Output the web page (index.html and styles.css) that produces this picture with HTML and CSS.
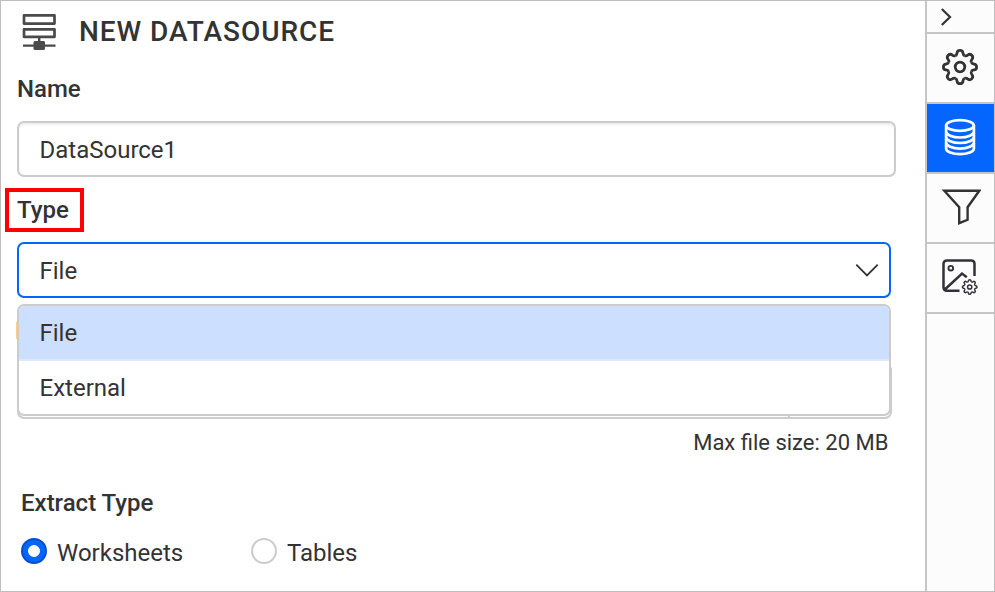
FILE: index.html
```html
<!DOCTYPE html>
<html lang="en">
<head>
<meta charset="utf-8">
<title>New Datasource</title>
<link rel="stylesheet" href="styles.css">
</head>
<body>
<div class="window">
  <main class="panel">
    <header class="header">
      <svg class="server" width="36" height="38" viewBox="0 0 36 38" fill="none" stroke="#4a4a4a">
        <path d="M2 2.400h30.500v8.200H2zM2 16.400h30.500v7.400H2z" stroke-width="2.700" stroke-linejoin="round"/>
        <path d="M17.200 25v4M1 32.600h32.500" stroke-width="2.400"/>
        <path d="M12.500 28h9.500l1 1v7l-1 1h-9.500l-1-1v-7z" fill="#4a4a4a" stroke="none"/>
      </svg>
      <h1 class="title">NEW DATASOURCE</h1>
    </header>
    <label class="label name-label">Name</label>
    <div class="input">DataSource1</div>
    <div class="type-label"><label class="label">Type</label></div>
    <div class="select">
      <span class="value">File</span>
      <svg width="24" height="14" viewBox="0 0 24 14" fill="none" stroke="#333" stroke-width="1.8"><path d="M1.300 1.700 12 12.400 22.700 1.700"/></svg>
      <div class="menu">
        <div class="option selected">File</div>
        <div class="option">External</div>
      </div>
    </div>
    <div class="upload"><span class="marker"></span><span class="browse"></span></div>
    <p class="hint">Max file size: 20 MB</p>
    <h2 class="label extract">Extract Type</h2>
    <div class="radios">
      <div class="choice"><span class="radio checked"></span><span class="text">Worksheets</span></div>
      <div class="choice"><span class="radio"></span><span class="text">Tables</span></div>
    </div>
  </main>
  <nav class="rail">
    <div class="cell collapse"><svg width="12" height="18" viewBox="0 0 12 18" fill="none" stroke="#333" stroke-width="2.2"><path d="M1.800 1 10 9 1.800 17"/></svg></div>
    <div class="cell"><svg width="38" height="38" viewBox="-19 -19 38 38" fill="none" stroke="#333" stroke-width="2.8">
      <defs><g id="gear">
        <path id="tooth" d="M-4.700-11.300C-3-12-3.100-13.200-2.900-14.400C-2.600-16-1.700-16.600 0-16.600S2.600-16 2.900-14.400C3.100-13.200 3-12 4.700-11.300"/>
        <use href="#tooth" transform="rotate(45)"/><use href="#tooth" transform="rotate(90)"/><use href="#tooth" transform="rotate(135)"/><use href="#tooth" transform="rotate(180)"/><use href="#tooth" transform="rotate(225)"/><use href="#tooth" transform="rotate(270)"/><use href="#tooth" transform="rotate(315)"/>
        <circle r="4.800"/>
      </g></defs>
      <use href="#gear"/>
    </svg></div>
    <div class="cell active"><svg width="32" height="38" viewBox="0 0 32 38" fill="none" stroke="#fff" stroke-width="2.7">
      <ellipse cx="16" cy="7.500" rx="13.900" ry="5.400"/>
      <path d="M2.100 7.500v22.900c0 3.200 6.200 5.800 13.900 5.800s13.900-2.600 13.900-5.800V7.500M2.100 13.500c0 3.200 6.200 6 13.900 6s13.900-2.800 13.900-6M2.100 19c0 3.200 6.200 6 13.900 6s13.900-2.800 13.900-6M2.100 24.600c0 3.200 6.200 6 13.900 6s13.900-2.800 13.900-6"/>
    </svg></div>
    <div class="cell filter"><svg width="42" height="38" viewBox="0 0 42 38" fill="none" stroke="#333" stroke-width="2.4"><path d="M5.300 2.700h35L28.600 19.200v12.600L20.200 35.200V19.200z"/></svg></div>
    <div class="cell image"><svg width="40" height="38" viewBox="0 0 40 38" fill="none" stroke="#33303a" stroke-width="2.5">
      <path d="M19.500 32.800H7c-2.200 0-3.500-1.300-3.500-3.500V5.800C3.500 3.700 4.800 2.400 7 2.400h24c2.200 0 3.500 1.300 3.500 3.400V18M4.800 31.500 22 15.600l4.800 3.600"/>
      <circle cx="10.800" cy="10.200" r="2.300" stroke-width="1.900"/>
      <use href="#gear" transform="translate(29.700 29) scale(.44)" stroke-width="3.400"/>
    </svg></div>
  </nav>
</div>
</body>
</html>
```
FILE: styles.css
```css
* { box-sizing: border-box; }
body { margin: 0; font: 24px/28px Roboto, "Liberation Sans", sans-serif; color: #333; background: #fff; }
.window { display: flex; width: 995px; height: 592px; border: 1px solid #bebebe; }
.panel { width: 924px; padding: 12px 29px 0 16px; }
.header { display: flex; align-items: center; height: 38px; padding-left: 5px; }
.title { margin: 0 0 0 21px; font-size: 28px; line-height: 36px; font-weight: 500; letter-spacing: .95px; }
.label { display: block; margin: 0; font-size: 24px; line-height: 28px; font-weight: 500; }
.name-label { margin-top: 24px; }
.input { height: 56px; margin-top: 18px; padding: 13px 20.500px; border: 2px solid #ccc; border-radius: 7px; box-shadow: inset 0 2px 2px rgba(0,0,0,.07); }
.type-label { width: 79px; height: 44px; margin: 11px 0 0 -12px; padding: 4px 0 0 8px; border: 4px solid #f00; }
.select { position: relative; display: flex; align-items: center; justify-content: space-between; width: 874px; height: 56px; margin-top: 10px; padding: 0 10px 0 20.500px; border: 2px solid #0565ff; border-radius: 7px; }
.value { padding-top: 2px; }
.menu { position: absolute; z-index: 1; top: 60px; left: -2px; width: 874px; height: 112px; border: 2px solid #ccc; border-radius: 7px; background: #fff; overflow: hidden; }
.option { height: 54px; padding: 13px 20.500px; }
.option.selected { height: 55px; background: #ccdfff; border-bottom: 2px solid #dce8ff; }
.upload { position: relative; width: 875px; height: 56px; margin-top: 65px; border: 2px solid #ccc; border-radius: 7px; }
.marker { position: absolute; top: -43px; left: -3px; width: 3px; height: 17px; background: #ffcf87; }
.browse { position: absolute; right: 100px; bottom: 0; width: 2px; height: 52px; background: #ccc; }
.hint { margin: 10px 3px 0 0; padding-right: 4.600px; font-size: 22px; line-height: 28px; text-align: right; }
.extract { margin: 32px 0 0 4px; }
.radios { display: flex; margin: 21px 0 0 4px; }
.choice { display: flex; align-items: flex-start; width: 230px; }
.radio { width: 26px; height: 26px; margin: 0 10px 0 0; border: 2px solid #ccc; border-radius: 50%; }
.radio.checked { border: 2px solid #0450cb; background: radial-gradient(circle, #fff 5.5px, #0565ff 6.3px); }
.text { padding-top: 1px; }
.rail { flex: 1; border-left: 2px solid #c6c6c6; background: #fcfcfc; }
.cell { display: flex; align-items: center; justify-content: center; height: 70px; padding: 0 2px 2px 0; border-bottom: 2px solid #c6c6c6; }
.collapse { height: 33px; justify-content: flex-start; padding: 0 0 0 13px; }
.active { background: #0565ff; }
```
